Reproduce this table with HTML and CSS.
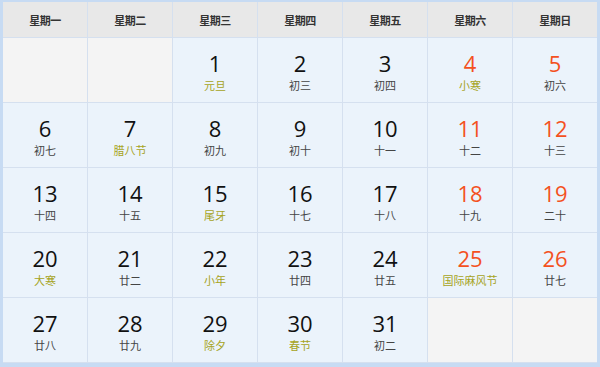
FILE: index.html
```html
<!DOCTYPE html>
<html lang="zh">
<head>
<meta charset="utf-8">
<link rel="stylesheet" href="styles.css">
</head>
<body>
<div class="cal">
  <div class="head">星期一</div>
  <div class="head">星期二</div>
  <div class="head">星期三</div>
  <div class="head">星期四</div>
  <div class="head">星期五</div>
  <div class="head">星期六</div>
  <div class="head">星期日</div>

  <div class="day empty"></div>
  <div class="day empty"></div>
  <div class="day"><span class="num">1</span><span class="lun fest">元旦</span></div>
  <div class="day"><span class="num">2</span><span class="lun">初三</span></div>
  <div class="day"><span class="num">3</span><span class="lun">初四</span></div>
  <div class="day we"><span class="num">4</span><span class="lun fest">小寒</span></div>
  <div class="day we"><span class="num">5</span><span class="lun">初六</span></div>

  <div class="day"><span class="num">6</span><span class="lun">初七</span></div>
  <div class="day"><span class="num">7</span><span class="lun fest">腊八节</span></div>
  <div class="day"><span class="num">8</span><span class="lun">初九</span></div>
  <div class="day"><span class="num">9</span><span class="lun">初十</span></div>
  <div class="day"><span class="num">10</span><span class="lun">十一</span></div>
  <div class="day we"><span class="num">11</span><span class="lun">十二</span></div>
  <div class="day we"><span class="num">12</span><span class="lun">十三</span></div>

  <div class="day"><span class="num">13</span><span class="lun">十四</span></div>
  <div class="day"><span class="num">14</span><span class="lun">十五</span></div>
  <div class="day"><span class="num">15</span><span class="lun fest">尾牙</span></div>
  <div class="day"><span class="num">16</span><span class="lun">十七</span></div>
  <div class="day"><span class="num">17</span><span class="lun">十八</span></div>
  <div class="day we"><span class="num">18</span><span class="lun">十九</span></div>
  <div class="day we"><span class="num">19</span><span class="lun">二十</span></div>

  <div class="day"><span class="num">20</span><span class="lun fest">大寒</span></div>
  <div class="day"><span class="num">21</span><span class="lun">廿二</span></div>
  <div class="day"><span class="num">22</span><span class="lun fest">小年</span></div>
  <div class="day"><span class="num">23</span><span class="lun">廿四</span></div>
  <div class="day"><span class="num">24</span><span class="lun">廿五</span></div>
  <div class="day we"><span class="num">25</span><span class="lun fest">国际麻风节</span></div>
  <div class="day we"><span class="num">26</span><span class="lun">廿七</span></div>

  <div class="day"><span class="num">27</span><span class="lun">廿八</span></div>
  <div class="day"><span class="num">28</span><span class="lun">廿九</span></div>
  <div class="day"><span class="num">29</span><span class="lun fest">除夕</span></div>
  <div class="day"><span class="num">30</span><span class="lun fest">春节</span></div>
  <div class="day"><span class="num">31</span><span class="lun">初二</span></div>
  <div class="day empty"></div>
  <div class="day empty"></div>
</div>
</body>
</html>
```
FILE: styles.css
```css
html, body {
  margin: 0;
  padding: 0;
  background: #ffffff;
}
body {
  font-family: "Noto Sans CJK SC", "Open Sans", sans-serif;
}
.cal {
  width: 600px;
  height: 367px;
  box-sizing: border-box;
  border-style: solid;
  border-color: #c7dbf3;
  border-width: 2px 3px 4px 3px;
  background: #d5e0ef;
  display: grid;
  grid-template-columns: repeat(7, 84px);
  grid-template-rows: 35px repeat(5, 64px);
  column-gap: 1px;
  row-gap: 1px;
}
.head {
  background: #e8e8e8;
  color: #333333;
  font-size: 11px;
  font-weight: bold;
  display: flex;
  align-items: center;
  justify-content: center;
  letter-spacing: -0.5px;
}
.day {
  background: #ebf3fb;
  display: flex;
  flex-direction: column;
  align-items: center;
  justify-content: center;
  gap: 2px;
}
.day.empty {
  background: #f4f4f4;
}
.num {
  font-family: "Open Sans", "Noto Sans", sans-serif;
  font-size: 22px;
  line-height: 28px;
  color: #111111;
}
.we .num {
  color: #f4511e;
}
.lun {
  font-size: 11px;
  line-height: 13px;
  color: #444444;
}
.lun.fest {
  color: #a6a31c;
}
```
